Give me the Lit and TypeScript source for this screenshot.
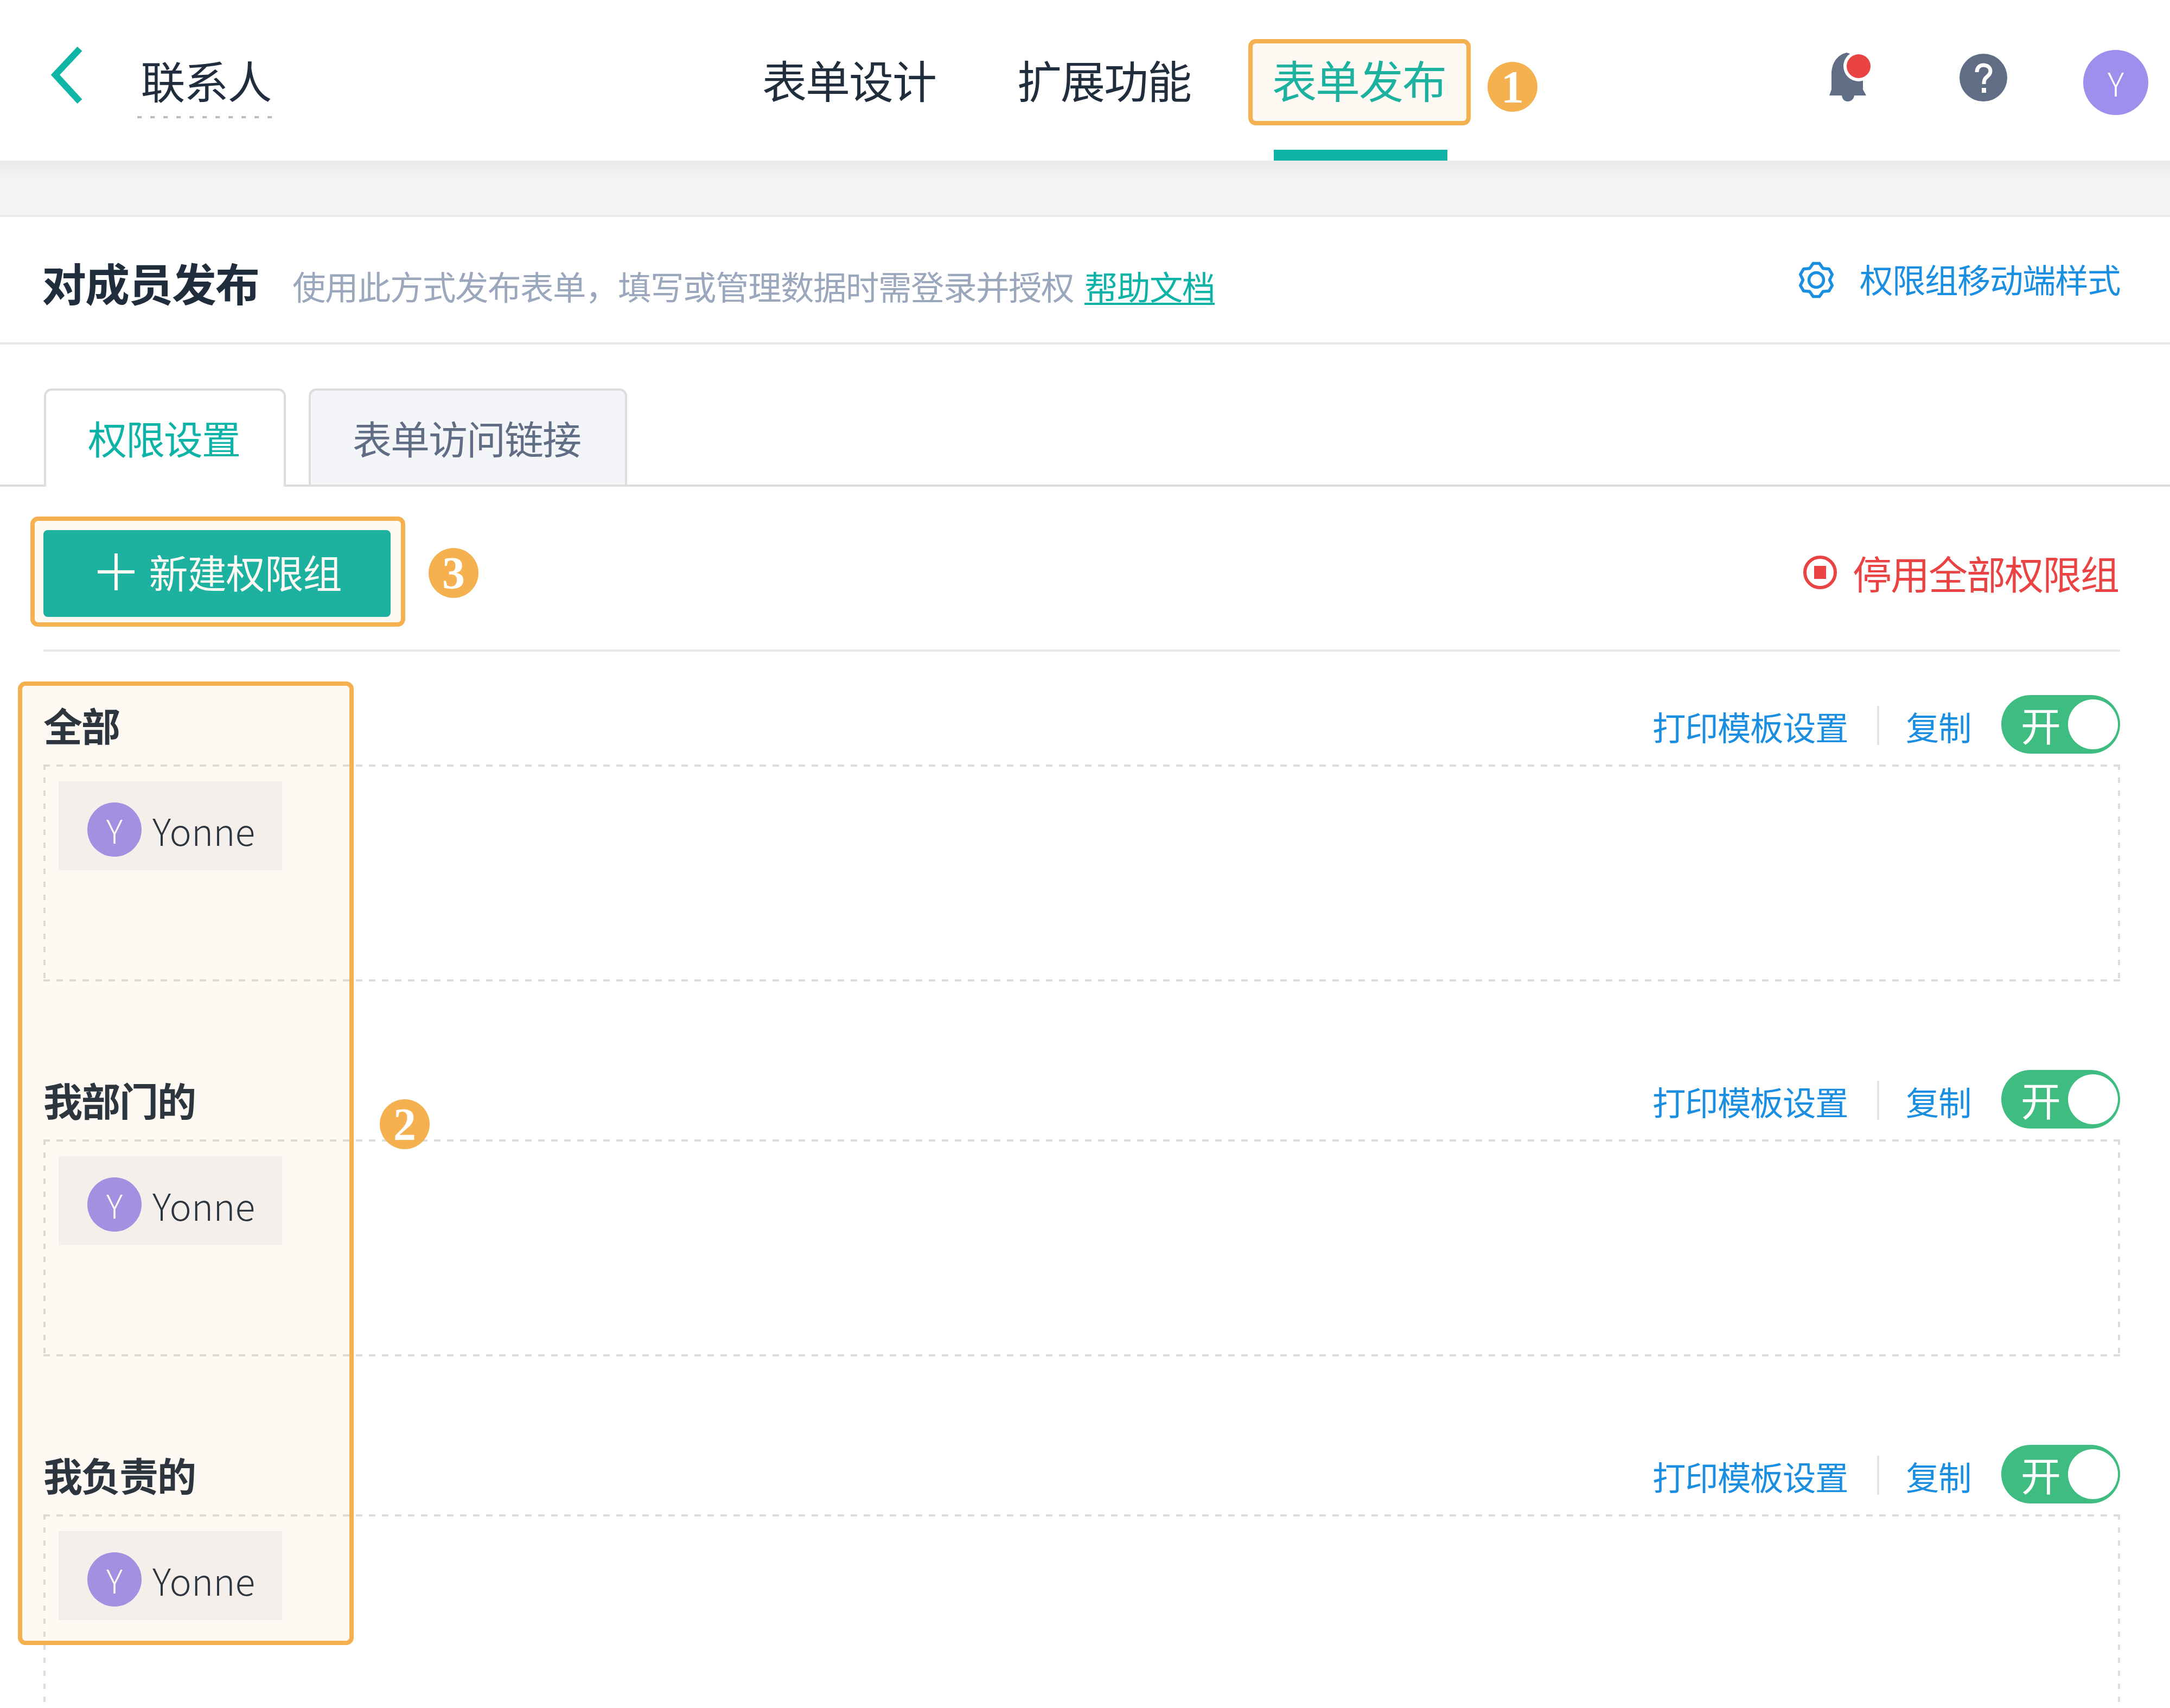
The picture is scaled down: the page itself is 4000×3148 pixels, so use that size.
import { LitElement, html, css, svg } from "lit";
import { customElement } from "lit/decorators.js";

const gearPath = () => {
  const cx = 36, cy = 40, pts: string[] = [];
  for (let i = 0; i < 6; i++) {
    const axis = -90 + i * 60;
    for (const [r, d] of [[24.5, -30], [31, -11], [31, 11]] as const) {
      const a = ((axis + d) * Math.PI) / 180;
      pts.push(`${(cx + r * Math.cos(a)).toFixed(1)} ${(cy + r * Math.sin(a)).toFixed(1)}`);
    }
  }
  return "M" + pts.join("L") + "Z";
};

const GROUPS = ["全部", "我部门的", "我负责的"];

@customElement("app-root")
export class AppRoot extends LitElement {
  static styles = css`
    :host {
      display: block;
      position: relative;
      width: 4000px;
      height: 3148px;
      overflow: hidden;
      background: #fff;
      color: #1f2d3d;
      font-family: "Noto Sans CJK SC", "Noto Sans", sans-serif;
      font-weight: 400;
      line-height: 1;
    }
    svg { display: block; flex: none; }

    .header { display: flex; height: 296px; align-items: flex-start; background: #fff; }
    .back { margin: 86px 0 0 94px; }
    .name {
      box-sizing: border-box; width: 259px; margin: 106px 0 0 101px; height: 112px; padding-right: 6px;
      font-size: 82px; letter-spacing: -2px; text-align: center;
      background: linear-gradient(to right, #bbb 8px, transparent 8px) left bottom / 24px 4px repeat-x;
    }
    .nav { display: flex; gap: 150px; margin-left: 896px; }
    .nav-item { box-sizing: border-box; width: 320px; height: 296px; padding: 0 0 4px; display: flex; align-items: center; font-size: 82px; letter-spacing: -2px; color: #1f2d3d; }
    .nav-item span { margin-left: -3px; white-space: nowrap; }
    .nav-item.active { color: #0db3a6; box-shadow: inset 0 -20px 0 #0db3a6; }
    .bell { margin: 95px 0 0 702px; }
    .help { margin: 99px 0 0 158px; }
    .top-avatar {
      width: 120px; height: 120px; margin: 92px 0 0 140px; border-radius: 50%;
      background: #9d8fec; color: #fff; font-size: 60px; font-weight: 300;
      display: flex; align-items: center; justify-content: center;
    }

    .band {
      box-sizing: border-box; height: 104px; border-bottom: 4px solid #ebebeb;
      background: linear-gradient(#e9eaea, #f4f5f4 36px);
    }

    .section { box-sizing: border-box; height: 235px; display: flex; align-items: flex-start; border-bottom: 4px solid #e9e9e9; padding: 0 92px 0 77px; }
    .title { font-size: 82px; letter-spacing: -2px; font-weight: 700; margin-top: 79px; }
    .desc { font-size: 61.5px; letter-spacing: -1.5px; color: #9aa7bc; margin: 96px 0 0 62px; white-space: nowrap; }
    .desc a { color: #0db3a6; text-decoration: underline; text-decoration-thickness: 4px; text-underline-offset: 5px; margin-left: 20px; }
    .mobile { margin-left: auto; display: flex; align-items: flex-start; gap: 44px; color: #1a8ee0; font-size: 61.5px; letter-spacing: -1.5px; padding-top: 76px; }
    .mobile span { margin-top: 7px; }

    .tabs { display: flex; gap: 42px; padding: 81px 0 0 81px; border-bottom: 4px solid #ddd; }
    .tab {
      box-sizing: border-box; height: 177px; padding: 50px 0 0 77px; font-size: 72px; letter-spacing: -2px; white-space: nowrap;
      border: 4px solid #ddd; border-bottom: none; border-radius: 14px 14px 0 0;
      background: #f4f5f9; color: #5f6d85; width: 587px;
    }
    .tab.active { width: 446px; height: 181px; margin-bottom: -4px; background: #fff; color: #0db3a6; }

    .toolbar { box-sizing: border-box; height: 304px; margin: 0 92px 0 80px; padding-top: 80px; border-bottom: 4px solid #e9e9e9; display: flex; justify-content: space-between; align-items: flex-start; }
    .new { box-sizing: border-box; width: 640px; height: 160px; padding: 0 0 8px 8px; border-radius: 8px; background: #0db3a6; color: #fff; font-size: 72px; letter-spacing: -1px; display: flex; align-items: center; justify-content: center; gap: 26px; }
    .new svg { margin: 2px 0 0 2px; }
    .stop { display: flex; align-items: center; gap: 29px; height: 160px; box-sizing: border-box; padding: 0 3px 4px 0; color: #e94343; font-size: 72px; letter-spacing: -2px; }

    .groups { margin: 0 92px 0 80px; }
    .group { padding: 80px 0 83px; }
    .row { height: 108px; margin-bottom: 20px; display: flex; align-items: center; }
    .gname { font-size: 72px; letter-spacing: -2px; font-weight: 700; }
    .actions { margin-left: auto; display: flex; align-items: center; color: #1a8ee0; font-size: 61.5px; letter-spacing: -1.5px; }
    .actions > span { margin-top: 8px; }
    .sep { width: 4px; height: 72px; background: #e5e5e5; margin: 4px 49px 0 54px; }
    .toggle { box-sizing: border-box; width: 219px; height: 108px; margin-left: 56px; padding: 0 4px 0 36px; border-radius: 54px; background: #3fbd80; color: #fff; font-size: 74px; letter-spacing: 0; display: flex; align-items: center; justify-content: space-between; }
    .toggle span { margin-bottom: 2px; }
    .toggle i { display: block; width: 92px; height: 92px; border-radius: 50%; background: #fff; }
    .box {
      box-sizing: border-box; height: 400px; padding: 31px 28px;
      background:
        linear-gradient(to right, #ddd 12px, transparent 12px) left top / 24px 4px repeat-x,
        linear-gradient(to right, #ddd 12px, transparent 12px) left bottom / 24px 4px repeat-x,
        linear-gradient(#ddd 10px, transparent 10px) left top / 4px 24px repeat-y,
        linear-gradient(#ddd 10px, transparent 10px) right top / 4px 24px repeat-y;
    }
    .chip { width: 412px; height: 164px; padding-left: 53px; box-sizing: border-box; background: #f5f5f7; display: flex; align-items: center; gap: 20px; font-size: 68px; }
    .chip-avatar { width: 100px; height: 100px; margin-top: 14px; border-radius: 50%; background: #9d8fec; color: #fff; font-size: 60px; font-weight: 300; display: flex; align-items: center; justify-content: center; }
    .chip b { font-weight: 300; margin-top: 16px; }

    .mark { position: absolute; box-sizing: border-box; border: 8px solid #f5b04f; border-radius: 14px; background: rgba(245, 176, 79, 0.07); pointer-events: none; }
    .mark1 { left: 2301px; top: 72px; width: 410px; height: 159px; }
    .mark2 { left: 33px; top: 1256px; width: 619px; height: 1776px; }
    .mark3 { left: 56px; top: 952px; width: 691px; height: 203px; }
    .badge { position: absolute; width: 92px; height: 92px; border-radius: 50%; background: #f5b04f; color: #fff; font: 700 84px "Liberation Serif", serif; display: flex; align-items: center; justify-content: center; }
    .badge1 { left: 2742px; top: 114px; }
    .badge2 { left: 700px; top: 2026px; }
    .badge3 { left: 790px; top: 1010px; }
  `;

  render() {
    return html`
      <div class="header">
        <svg class="back" width="58" height="105" viewBox="0 0 58 105" fill="none" stroke="#0fb5a5" stroke-width="12"><path d="M53 4 L8 52 L53 101"/></svg>
        <div class="name">联系人</div>
        <div class="nav">
          <div class="nav-item"><span>表单设计</span></div>
          <div class="nav-item"><span>扩展功能</span></div>
          <div class="nav-item active"><span>表单发布</span></div>
        </div>
        <svg class="bell" width="84" height="95" viewBox="0 0 84 95">
          <path fill="#5f6d85" d="M34 2C16 6 6 22 6 42V70L2 81H70L64 70V42C64 22 50 6 34 2ZM25 81H48C47 88 42 92 36 92C30 92 26 88 25 81Z"/>
          <circle cx="56" cy="27" r="28" fill="#fff"/><circle cx="56" cy="27" r="22" fill="#e94343"/>
        </svg>
        <svg class="help" width="88" height="88" viewBox="0 0 88 88">
          <circle cx="44" cy="44" r="44" fill="#5f6d85"/>
          <path fill="none" stroke="#fff" stroke-width="7" d="M32 34C32 25 38 21 44 21C51 21 57 25 57 32C57 38 52 41 48 45C46 47 45 50 45 56"/>
          <rect x="41" y="63" width="8" height="9" fill="#fff"/>
        </svg>
        <div class="top-avatar">Y</div>
      </div>
      <div class="band"></div>
      <div class="section">
        <div class="title">对成员发布</div>
        <div class="desc">使用此方式发布表单，填写或管理数据时需登录并授权<a>帮助文档</a></div>
        <div class="mobile">
          <svg width="72" height="80" viewBox="0 0 72 80" fill="none" stroke="#1a8ee0" stroke-width="5.5" stroke-linejoin="round">
            ${svg`<path d=${gearPath()}/>`}<circle cx="36" cy="40" r="13.5"/>
          </svg>
          <span>权限组移动端样式</span>
        </div>
      </div>
      <div class="tabs">
        <div class="tab active">权限设置</div>
        <div class="tab">表单访问链接</div>
      </div>
      <div class="toolbar">
        <div class="new">
          <svg width="68" height="68" viewBox="0 0 68 68" stroke="#fff" stroke-width="6"><path d="M34 0V68M0 34H68"/></svg>
          <span>新建权限组</span>
        </div>
        <div class="stop">
          <svg width="62" height="64" viewBox="0 0 62 64"><circle cx="31" cy="32" r="28" fill="none" stroke="#e94343" stroke-width="6"/><rect x="20" y="20" width="22" height="24" fill="#e94343"/></svg>
          <span>停用全部权限组</span>
        </div>
      </div>
      <div class="groups">
        ${GROUPS.map(
          (g) => html`
            <div class="group">
              <div class="row">
                <div class="gname">${g}</div>
                <div class="actions">
                  <span>打印模板设置</span><div class="sep"></div><span>复制</span>
                  <div class="toggle"><span>开</span><i></i></div>
                </div>
              </div>
              <div class="box">
                <div class="chip"><div class="chip-avatar">Y</div><b>Yonne</b></div>
              </div>
            </div>
          `
        )}
      </div>
      <div class="mark mark1"></div>
      <div class="mark mark2"></div>
      <div class="mark mark3"></div>
      <div class="badge badge1">1</div>
      <div class="badge badge2">2</div>
      <div class="badge badge3">3</div>
    `;
  }
}
